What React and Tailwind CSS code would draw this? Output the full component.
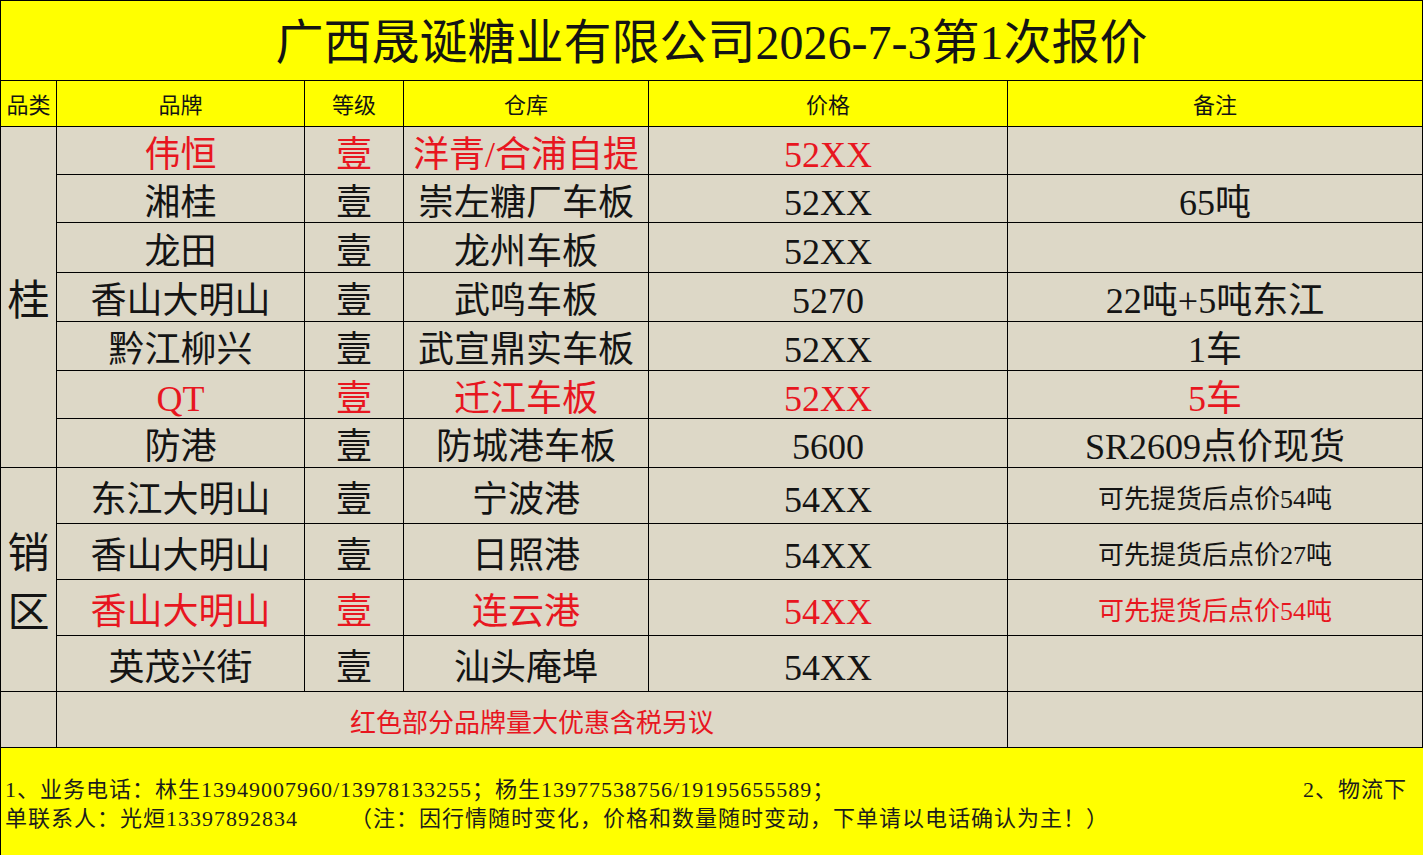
import React from 'react';

const red = 'text-[#e8161f]';
const ink = 'text-[#141414]';

const guiRows = [
  { brand: '伟恒', wh: '洋青/合浦自提', price: '52XX', note: '', hot: true, noteHot: false, h: 'h-[48px]' },
  { brand: '湘桂', wh: '崇左糖厂车板', price: '52XX', note: '65吨', h: 'h-[48px]' },
  { brand: '龙田', wh: '龙州车板', price: '52XX', note: '', h: 'h-[50px]' },
  { brand: '香山大明山', wh: '武鸣车板', price: '5270', note: '22吨+5吨东江', h: 'h-[49px]' },
  { brand: '黔江柳兴', wh: '武宣鼎实车板', price: '52XX', note: '1车', h: 'h-[49px]' },
  { brand: 'QT', wh: '迁江车板', price: '52XX', note: '5车', hot: true, noteHot: true, h: 'h-[48px]' },
  { brand: '防港', wh: '防城港车板', price: '5600', note: 'SR2609点价现货', h: 'h-[49px]' },
];

const xiaoRows = [
  { brand: '东江大明山', wh: '宁波港', price: '54XX', note: '可先提货后点价54吨' },
  { brand: '香山大明山', wh: '日照港', price: '54XX', note: '可先提货后点价27吨' },
  { brand: '香山大明山', wh: '连云港', price: '54XX', note: '可先提货后点价54吨', hot: true, noteHot: true },
  { brand: '英茂兴街', wh: '汕头庵埠', price: '54XX', note: '' },
];

const cell = 'flex items-center justify-center border-r border-b border-black whitespace-nowrap';

function Row({ r, h, noteSize }) {
  const c = r.hot ? red : ink;
  const nc = r.noteHot ? red : ink;
  return (
    <div className={`flex ${h}`}>
      <div className={`${cell} pt-[8px] w-[248px] text-[36px] ${c}`}>{r.brand}</div>
      <div className={`${cell} pt-[8px] w-[99px] text-[36px] ${c}`}>壹</div>
      <div className={`${cell} pt-[8px] w-[245px] text-[36px] ${c}`}>{r.wh}</div>
      <div className={`${cell} pt-[8px] w-[359px] text-[36px] ${c}`}>{r.price}</div>
      <div className={`${cell} pt-[8px] flex-1 ${noteSize} ${nc}`}>{r.note}</div>
    </div>
  );
}

export default function App() {
  return (
    <div
      className="w-[1423px] h-[855px] overflow-hidden bg-[#ddd8c7] text-[#141414] leading-none"
      style={{ fontFamily: '"Liberation Serif", "Noto Sans CJK SC", serif' }}
    >
      {/* title */}
      <div className="h-[81px] bg-[#ffff00] border border-black flex items-center justify-center text-[48px] pt-[4px]">
        广西晟诞糖业有限公司2026-7-3第1次报价
      </div>

      {/* header */}
      <div className="flex h-[46px] bg-[#ffff00] border-l border-black text-[22px]">
        <div className={`${cell} pt-[5px] w-[56px]`}>品类</div>
        <div className={`${cell} pt-[5px] w-[248px]`}>品牌</div>
        <div className={`${cell} pt-[5px] w-[99px]`}>等级</div>
        <div className={`${cell} pt-[5px] w-[245px]`}>仓库</div>
        <div className={`${cell} pt-[5px] w-[359px]`}>价格</div>
        <div className={`${cell} pt-[5px] flex-1`}>备注</div>
      </div>

      {/* 桂 */}
      <div className="flex border-l border-black">
        <div className={`${cell} pt-[8px] w-[56px] text-[42px]`}>桂</div>
        <div className="flex-1 flex flex-col">
          {guiRows.map((r, i) => (
            <Row key={i} r={r} h={r.h} noteSize="text-[36px]" />
          ))}
        </div>
      </div>

      {/* 销区 */}
      <div className="flex border-l border-black">
        <div className={`${cell} pt-[8px] w-[56px] text-[42px] flex-col leading-[59px]`}>
          <span>销</span>
          <span>区</span>
        </div>
        <div className="flex-1 flex flex-col">
          {xiaoRows.map((r, i) => (
            <Row key={i} r={r} h="h-[56px]" noteSize="text-[26px]" />
          ))}
        </div>
      </div>

      {/* note row */}
      <div className="flex h-[56px] border-l border-black">
        <div className={`${cell} w-[56px]`}></div>
        <div className={`${cell} pt-[8px] w-[951px] text-[26px] ${red}`}>红色部分品牌量大优惠含税另议</div>
        <div className={`${cell} flex-1`}></div>
      </div>

      {/* footer */}
      <div className="h-[107px] bg-[#ffff00] border-l border-black flex flex-col justify-center pl-[4px] pr-[16px] text-[22px] leading-[29px] tracking-[1px] text-[#1c1c1c] pt-[4px]">
        <div className="flex justify-between">
          <span>1、业务电话：林生13949007960/13978133255；杨生13977538756/19195655589；</span>
          <span>2、物流下</span>
        </div>
        <div className="whitespace-pre">单联系人：光烜13397892834        （注：因行情随时变化，价格和数量随时变动，下单请以电话确认为主！）</div>
      </div>
    </div>
  );
}
